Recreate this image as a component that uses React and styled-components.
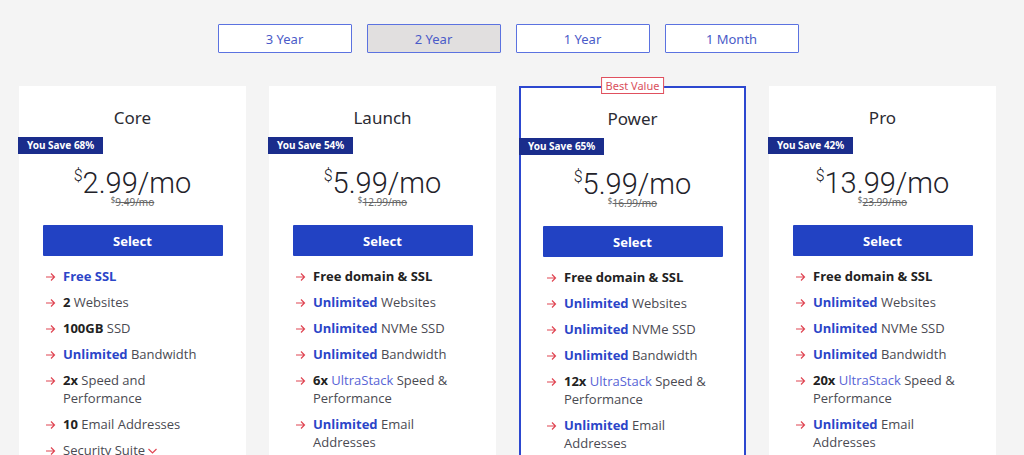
import styled, { createGlobalStyle } from "styled-components";

const GlobalStyle = createGlobalStyle`
  body {
    margin: 0;
    background: #f4f4f4;
    font-family: "Open Sans", sans-serif;
    overflow: hidden;
  }
`;

const Page = styled.div`
  padding: 24px 27px 0 19px;
`;

const Tabs = styled.div`
  display: flex;
  justify-content: center;
  gap: 15px;
  margin-bottom: 33px;
`;

const Tab = styled.button`
  width: 134px;
  height: 29px;
  border: 1px solid #5b72e0;
  border-radius: 1px;
  background: ${(p) => (p.$active ? "#e1dfdf" : "#fff")};
  color: #4a5bc8;
  font-family: "Noto Sans", sans-serif;
  font-size: 13px;
  cursor: pointer;
`;

const Grid = styled.div`
  display: grid;
  grid-template-columns: repeat(4, 227px);
  gap: 23px;
  align-items: start;
`;

const Card = styled.div`
  position: relative;
  box-sizing: border-box;
  background: #fff;
  height: 420px;
  border: ${(p) => (p.$featured ? "2px solid #2c47cf" : "1px solid transparent")};
  padding: 19px 0 0;
`;

const Ribbon = styled.div`
  position: absolute;
  top: -11px;
  left: 50%;
  transform: translateX(-50%);
  background: #fff;
  border: 1px solid #e0505e;
  color: #d9505d;
  font-family: "Noto Sans", sans-serif;
  font-size: 11px;
  line-height: 15px;
  padding: 0 4px;
  white-space: nowrap;
`;

const Title = styled.h2`
  margin: 0;
  text-align: center;
  font-family: "Noto Sans", sans-serif;
  font-weight: 400;
  font-size: 17px;
  line-height: 24px;
  color: #2b2b33;
`;

const Save = styled.div`
  display: inline-block;
  margin: 7px 0 0 -2px;
  background: #1a2d8c;
  color: #fff;
  font-family: "Noto Sans", sans-serif;
  font-weight: 700;
  font-size: 10px;
  line-height: 17px;
  padding: 0 9px;
`;

const Price = styled.div`
  text-align: center;
  font-family: Roboto, sans-serif;
  font-weight: 300;
  font-size: 29px;
  line-height: 30px;
  color: #22222a;
  margin-top: 14px;

  sup {
    font-size: 16px;
    vertical-align: 12px;
    line-height: 0;
  }
`;

const OldPrice = styled.div`
  text-align: center;
  font-family: "Noto Sans", sans-serif;
  font-size: 10px;
  line-height: 10px;
  color: #666;
  margin-top: -1px;

  s {
    text-decoration: line-through;
  }

  sup {
    font-size: 8px;
    vertical-align: 3px;
    line-height: 0;
  }
`;

const Select = styled.button`
  display: block;
  width: 180px;
  height: 31px;
  margin: 18px auto 0;
  border: none;
  border-radius: 1px;
  background: #2242c3;
  color: #fff;
  font-family: "Noto Sans", sans-serif;
  font-weight: 700;
  font-size: 13px;
  cursor: pointer;
`;

const Features = styled.ul`
  list-style: none;
  margin: 11px 0 0;
  padding: 0 20px 0 25px;
`;

const Feature = styled.li`
  display: flex;
  align-items: flex-start;
  gap: 7px;
  font-size: 13px;
  line-height: 18px;
  color: #4a4a52;
  margin-bottom: 8px;

  b {
    font-weight: 700;
    color: #2b45c8;
  }

  em {
    font-style: normal;
    color: #5864d6;
  }
`;

const Dark = styled.b`
  && {
    color: #222;
  }
`;

const Arrow = () => (
  <svg width="11" height="18" viewBox="0 0 11 18" style={{ flex: "none" }}>
    <path d="M1 10h8.5M6 6.5l3.5 3.5L6 13.5" fill="none" stroke="#e04653" strokeWidth="1.2" />
  </svg>
);

const Chevron = () => (
  <svg width="11" height="10" viewBox="0 0 11 10" style={{ marginLeft: 2, verticalAlign: -1 }}>
    <path d="M1.5 3l4 4 4-4" fill="none" stroke="#e04653" strokeWidth="1.2" />
  </svg>
);

const plans = [
  {
    name: "Core",
    save: 68,
    price: "2.99",
    old: "9.49",
    features: [
      <b>Free SSL</b>,
      <><Dark>2</Dark> Websites</>,
      <><Dark>100GB</Dark> SSD</>,
      <><b>Unlimited</b> Bandwidth</>,
      <><Dark>2x</Dark> Speed and Performance</>,
      <><Dark>10</Dark> Email Addresses</>,
      <>Security Suite<Chevron /></>,
    ],
  },
  { name: "Launch", save: 54, price: "5.99", old: "12.99", speed: "6x" },
  { name: "Power", save: 65, price: "5.99", old: "16.99", speed: "12x", featured: true },
  { name: "Pro", save: 42, price: "13.99", old: "23.99", speed: "20x" },
];

const fullFeatures = (speed) => [
  <Dark>Free domain &amp; SSL</Dark>,
  <><b>Unlimited</b> Websites</>,
  <><b>Unlimited</b> NVMe SSD</>,
  <><b>Unlimited</b> Bandwidth</>,
  <><Dark>{speed}</Dark> <em>UltraStack</em> Speed &amp; Performance</>,
  <><b>Unlimited</b> Email Addresses</>,
];

export default function App() {
  return (
    <Page>
      <GlobalStyle />
      <Tabs>
        <Tab>3 Year</Tab>
        <Tab $active>2 Year</Tab>
        <Tab>1 Year</Tab>
        <Tab>1 Month</Tab>
      </Tabs>
      <Grid>
        {plans.map((p) => (
          <Card key={p.name} $featured={p.featured}>
            {p.featured && <Ribbon>Best Value</Ribbon>}
            <Title>{p.name}</Title>
            <Save>You Save {p.save}%</Save>
            <Price>
              <sup>$</sup>
              {p.price}/mo
            </Price>
            <OldPrice>
              <sup>$</sup>
              <s>{p.old}/mo</s>
            </OldPrice>
            <Select>Select</Select>
            <Features>
              {(p.features || fullFeatures(p.speed)).map((f, i) => (
                <Feature key={i}>
                  <Arrow />
                  <span>{f}</span>
                </Feature>
              ))}
            </Features>
          </Card>
        ))}
      </Grid>
    </Page>
  );
}
